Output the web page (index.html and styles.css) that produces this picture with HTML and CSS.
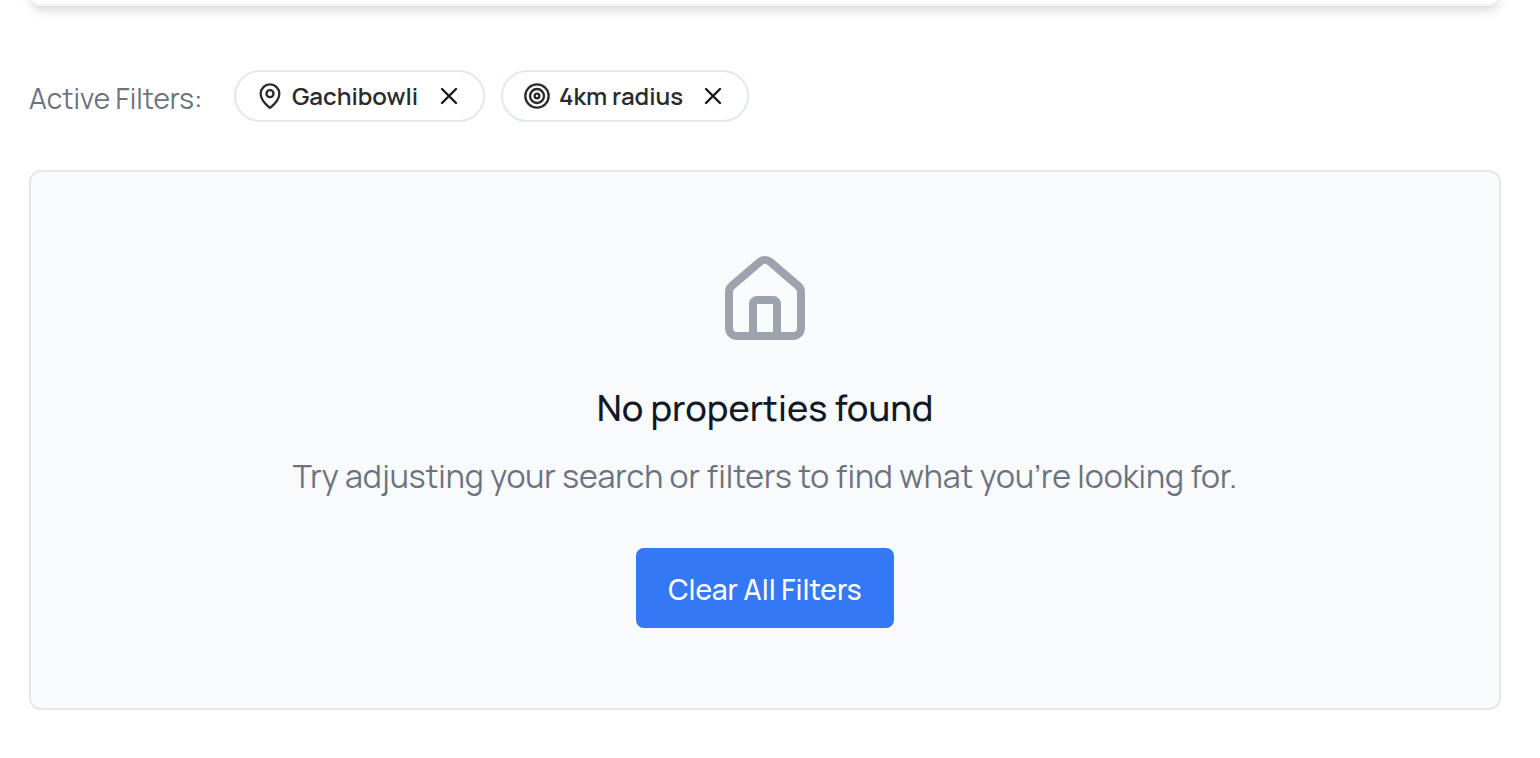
FILE: index.html
```html
<!DOCTYPE html>
<html lang="en">
<head>
<meta charset="utf-8">
<title>Properties</title>
<link rel="stylesheet" href="styles.css">
</head>
<body>
<main class="page">
  <div class="search-card"></div>
  <div class="filters">
    <span class="filters-label">Active Filters:</span>
    <div class="chip">
      <svg class="icon" viewBox="0 0 24 24"><path d="M20 10c0 4.993-5.539 10.193-7.399 11.799a1 1 0 0 1-1.202 0C9.539 20.193 4 14.993 4 10a8 8 0 0 1 16 0"/><circle cx="12" cy="10" r="3"/></svg>
      <span class="chip-text place">Gachibowli</span>
      <svg class="icon close" viewBox="0 0 24 24"><path d="M18 6 6 18M6 6l12 12"/></svg>
    </div>
    <div class="chip">
      <svg class="icon" viewBox="0 0 24 24"><circle cx="12" cy="12" r="10"/><circle cx="12" cy="12" r="6"/><circle cx="12" cy="12" r="2"/></svg>
      <span class="chip-text radius">4km radius</span>
      <svg class="icon close" viewBox="0 0 24 24"><path d="M18 6 6 18M6 6l12 12"/></svg>
    </div>
  </div>
  <section class="empty">
    <svg class="house" viewBox="0 0 24 24"><path d="M15 21v-8a1 1 0 0 0-1-1h-4a1 1 0 0 0-1 1v8"/><path d="M3 10a2 2 0 0 1 .709-1.528l7-5.999a2 2 0 0 1 2.582 0l7 5.999A2 2 0 0 1 21 10v9a2 2 0 0 1-2 2H5a2 2 0 0 1-2-2z"/></svg>
    <h3 class="title">No properties found</h3>
    <p class="message">Try adjusting your search or filters to find what you’re looking for.</p>
    <button class="clear">Clear All Filters</button>
  </section>
</main>
</body>
</html>
```
FILE: styles.css
```css
* { box-sizing: border-box; }
body {
  margin: 0;
  background: #fff;
  font-family: Manrope, Inter, "Liberation Sans", sans-serif;
  overflow: hidden;
}
.page {
  display: flow-root;
  height: 758px;
  padding: 0 39px 0 29px;
}
.search-card {
  height: 60px;
  margin-top: -54px;
  border: 2px solid #f3f4f6;
  border-radius: 12px;
  background: #fff;
  box-shadow: 0 8px 12px -2px rgba(0, 0, 0, .1), 0 4px 8px -4px rgba(0, 0, 0, .1);
}
.filters {
  display: flex;
  align-items: center;
  gap: 16px;
  margin-top: 64px;
  height: 52px;
}
.filters-label {
  width: 189px;
  padding-top: 4px;
  font-size: 28px;
  line-height: 40px;
  font-weight: 400;
  color: #6b7280;
  white-space: nowrap;
}
.chip {
  display: flex;
  align-items: center;
  height: 52px;
  padding: 0 20px;
  border: 2px solid #e2e8f0;
  border-radius: 26px;
  color: #2b2b2b;
}
.icon {
  width: 28px;
  height: 28px;
  flex: none;
  fill: none;
  stroke: currentColor;
  stroke-width: 2;
  stroke-linecap: round;
  stroke-linejoin: round;
}
.close { color: #171717; }
.chip-text {
  margin-left: 8px;
  font-size: 24px;
  line-height: 32px;
  font-weight: 600;
  white-space: nowrap;
}
.place { width: 143px; }
.radius { width: 140px; }
.empty {
  display: flex;
  flex-direction: column;
  align-items: center;
  height: 540px;
  margin-top: 48px;
  padding-top: 80px;
  border: 2px solid #e5e7eb;
  border-radius: 12px;
  background: #f9fafc;
}
.house {
  width: 96px;
  height: 96px;
  fill: none;
  stroke: #9ca3af;
  stroke-width: 2;
  stroke-linecap: round;
  stroke-linejoin: round;
}
.title {
  margin: 32px 0 0;
  font-size: 36px;
  line-height: 56px;
  font-weight: 500;
  color: #111827;
}
.message {
  margin: 16px 0 0;
  font-size: 32px;
  line-height: 48px;
  font-weight: 400;
  color: #6b7280;
  white-space: nowrap;
}
.clear {
  width: 258px;
  height: 80px;
  margin-top: 48px;
  padding: 1px 0 0;
  border: 0;
  border-radius: 8px;
  background: #3478f6;
  color: #fff;
  font-family: inherit;
  font-size: 28px;
  font-weight: 500;
  white-space: nowrap;
}
```
